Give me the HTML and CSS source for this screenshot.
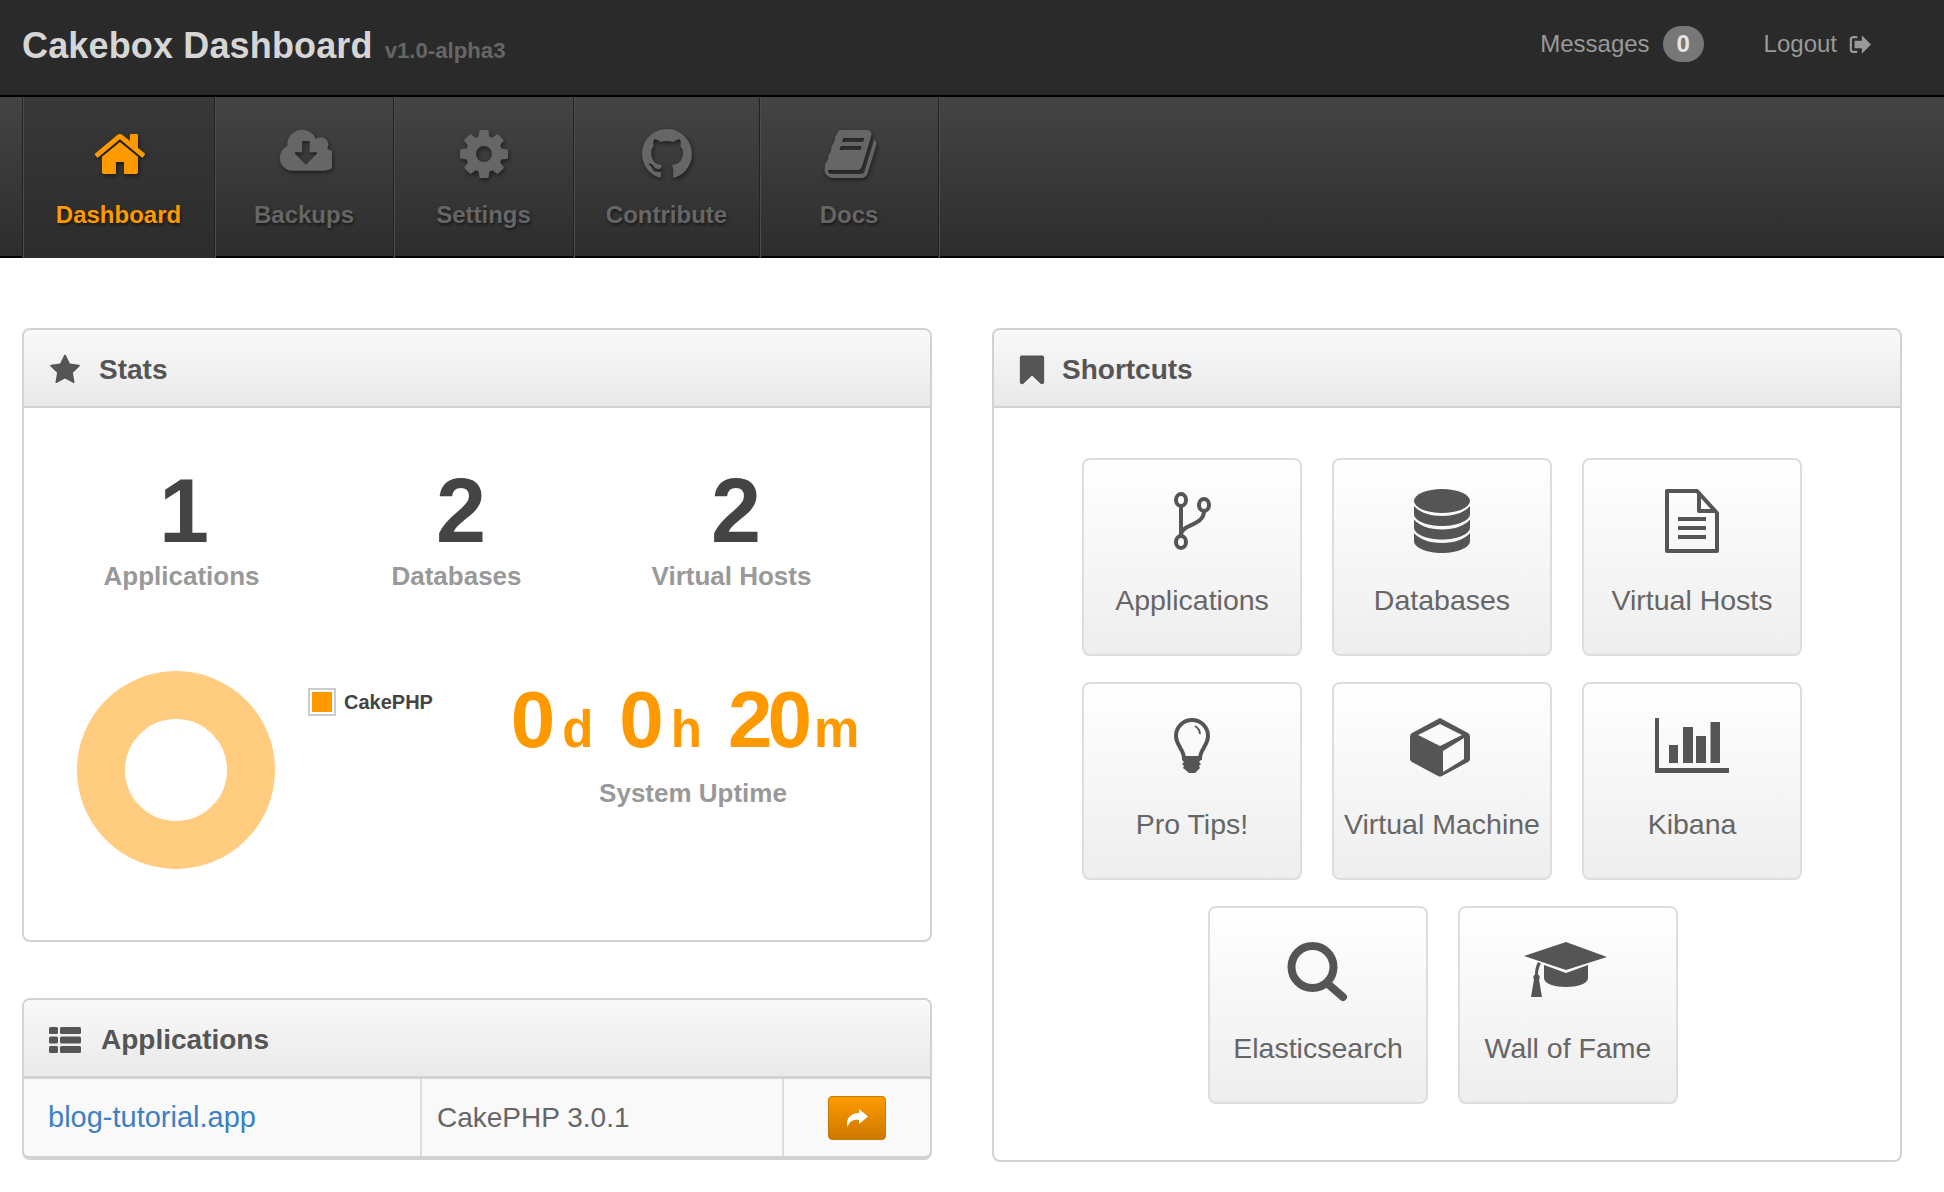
FILE: index.html
```html
<!DOCTYPE html>
<html lang="en">
<head>
<meta charset="utf-8">
<title>Cakebox Dashboard</title>
<link rel="stylesheet" href="styles.css">
</head>
<body>
<header class="topbar">
  <div class="brand"><span class="brand-name">Cakebox Dashboard</span><small class="brand-version">v1.0-alpha3</small></div>
  <div class="topbar-links">
    <a class="top-link">Messages<span class="badge">0</span></a>
    <a class="top-link logout">Logout
      <svg class="logout-icon" viewBox="0 0 24 20"><path d="M9 2H4.500A2.500 2.500 0 0 0 2 4.500v11A2.500 2.500 0 0 0 4.500 18H9" fill="none" stroke="currentColor" stroke-width="2.400"/><path d="M14 0l10 10-10 10v-6H6V6h8z" fill="currentColor"/></svg>
    </a>
  </div>
</header>
<nav class="mainnav">
  <a class="nav-item active">
    <svg class="nav-icon" viewBox="-30 0 1792 1792"><path d="M1472 992v480q0 26-19 45t-45 19h-384v-384h-256v384h-384q-26 0-45-19t-19-45v-480q0-1 .5-3t.5-3l575-474 575 474q1 2 1 6zm223-69l-62 74q-8 9-21 11h-3q-13 0-21-7l-692-577-692 577q-12 8-24 7-13-2-21-11l-62-74q-8-10-7-23.500t11-21.500l719-599q32-26 76-26t76 26l244 204v-195q0-14 9-23t23-9h192q14 0 23 9t9 23v408l219 182q10 8 11 21.500t-7 23.500z"/></svg>
    <span>Dashboard</span>
  </a>
  <a class="nav-item">
    <svg class="nav-icon" viewBox="-130 0 1920 1792"><path d="M1280 864q0-14-9-23t-23-9h-224v-352q0-13-9.500-22.500t-22.500-9.500h-192q-13 0-22.500 9.500t-9.500 22.500v352h-224q-13 0-22.500 9.500t-9.500 22.500q0 14 9 23l352 352q9 9 23 9t23-9l351-351q10-12 10-24zm640 224q0 159-112.500 271.500t-271.500 112.500h-1088q-185 0-316.500-131.500t-131.500-316.500q0-130 70-240t188-165q-2-30-2-43 0-212 150-362t362-150q156 0 285.500 87t188.500 231q71-62 166-62 106 0 181 75t75 181q0 76-41 138 130 31 213.500 135.500t83.500 238.500z"/></svg>
    <span>Backups</span>
  </a>
  <a class="nav-item">
    <svg class="nav-icon" viewBox="0 0 1792 1792"><path d="M1152 896q0-106-75-181t-181-75-181 75-75 181 75 181 181 75 181-75 75-181zm512-109v222q0 12-8 23t-20 13l-185 28q-19 54-39 91 35 50 107 138 10 12 10 25t-9 23q-27 37-99 108t-94 71q-12 0-26-9l-138-108q-44 23-91 38-16 136-29 186-7 28-36 28h-222q-14 0-24.500-8.500t-11.500-21.500l-28-184q-49-16-90-37l-141 107q-10 9-25 9-14 0-25-11-126-114-165-168-7-10-7-23 0-12 8-23 15-21 51-66.500t54-70.500q-27-50-41-99l-183-27q-13-2-21-12.500t-8-23.500v-222q0-12 8-23t19-13l186-28q14-46 39-92-40-57-107-138-10-12-10-24 0-10 9-23 26-36 98.500-107.500t94.500-71.500q13 0 26 10l138 107q44-23 91-38 16-136 29-186 7-28 36-28h222q14 0 24.500 8.500t11.500 21.500l28 184q49 16 90 37l142-107q9-9 24-9 13 0 25 10 129 119 165 170 7 8 7 22 0 12-8 23-15 21-51 66.500t-54 70.500q26 50 41 98l183 28q13 2 21 12.500t8 23.500z"/></svg>
    <span>Settings</span>
  </a>
  <a class="nav-item">
    <svg class="nav-icon" viewBox="-1 -1 18 18"><path d="M8 0C3.580 0 0 3.580 0 8c0 3.540 2.290 6.530 5.470 7.590.4.070.55-.17.55-.38 0-.19-.01-.82-.01-1.490-2.010.37-2.530-.49-2.690-.94-.09-.23-.48-.94-.82-1.130-.28-.15-.68-.52-.01-.53.63-.01 1.080.58 1.230.82.72 1.210 1.870.87 2.330.66.07-.52.28-.87.51-1.070-1.780-.2-3.640-.89-3.640-3.950 0-.87.31-1.590.82-2.150-.08-.2-.36-1.020.08-2.120 0 0 .67-.21 2.200.82.64-.18 1.320-.27 2-.27.68 0 1.360.09 2 .27 1.530-1.040 2.200-.82 2.200-.82.44 1.100.16 1.920.08 2.120.51.56.82 1.270.82 2.150 0 3.070-1.870 3.750-3.650 3.950.29.25.54.73.54 1.480 0 1.070-.01 1.930-.01 2.200 0 .21.15.46.55.38A8.013 8.013 0 0016 8c0-4.420-3.580-8-8-8z"/></svg>
    <span>Contribute</span>
  </a>
  <a class="nav-item">
    <svg class="nav-icon" viewBox="-110 0 1792 1792"><path d="M1639 478q40 57 18 129l-275 906q-19 64-76.500 107.500t-122.500 43.500h-923q-77 0-148.500-53.500t-99.500-131.500q-24-67-2-127 0-4 3-27t4-37q1-8-3-21.500t-3-19.500q2-11 8-21t16.500-23.500 16.500-23.500q23-38 45-91.500t30-91.500q3-10 .5-30t-.5-28q3-11 17-28t17-23q21-36 42-92t25-90q1-9-2.500-32t.5-28q4-13 22-30.500t22-22.500q19-26 42.500-84.500t27.500-96.500q1-8-3-25.500t-2-26.500q2-8 9-18t18-23 17-21q8-12 16.500-30.500t15-35 16-36 19.500-32 26.500-23.500 36-11.500 47.500 5.500l-1 3q38-9 51-9h761q74 0 114 56t18 130l-274 906q-36 119-71.500 153.500t-128.500 34.500h-869q-27 0-38 15-11 16-1 43 24 70 144 70h923q29 0 56-15.500t35-41.500l300-987q7-22 5-57 38 15 59 43zm-1064 2q-4 13 2 22.500t20 9.500h608q13 0 25.500-9.500t16.500-22.500l21-64q4-13-2-22.500t-20-9.500h-608q-13 0-25.500 9.500t-16.500 22.500zm-83 256q-4 13 2 22.500t20 9.500h608q13 0 25.500-9.500t16.500-22.500l21-64q4-13-2-22.500t-20-9.500h-608q-13 0-25.500 9.500t-16.500 22.500z"/></svg>
    <span>Docs</span>
  </a>
</nav>
<main class="content">
  <div class="column">
    <section class="panel stats-panel">
      <h2 class="panel-head">
        <svg class="head-icon" viewBox="0 0 1792 1792"><path d="M1728 647q0 22-26 48l-363 354 86 500q1 7 1 20 0 21-10.500 35.500t-30.500 14.500q-19 0-40-12l-449-236-449 236q-22 12-40 12-21 0-31.500-14.500t-10.500-35.500q0-6 2-20l86-500-364-354q-25-27-25-48 0-37 56-46l502-73 225-455q19-41 49-41t49 41l225 455 502 73q56 9 56 46z"/></svg>
        Stats
      </h2>
      <div class="stats-row">
        <div class="stat stat-first"><div class="stat-num">1</div><div class="stat-label">Applications</div></div>
        <div class="stat"><div class="stat-num">2</div><div class="stat-label">Databases</div></div>
        <div class="stat"><div class="stat-num">2</div><div class="stat-label">Virtual Hosts</div></div>
      </div>
      <div class="chart-row">
        <svg class="donut" viewBox="0 0 198 198"><circle cx="99" cy="99" r="75" fill="none" stroke="#ffcc80" stroke-width="48"/></svg>
        <div class="legend"><span class="legend-swatch"><span class="legend-fill"></span></span>CakePHP</div>
        <div class="uptime">
          <div class="uptime-value"><span class="num">0</span><span class="unit">d</span><span class="num">0</span><span class="unit">h</span><span class="num tight">20</span><span class="unit">m</span></div>
          <div class="uptime-label">System Uptime</div>
        </div>
      </div>
    </section>
    <section class="panel apps-panel">
      <h2 class="panel-head apps-head">
        <svg class="head-icon list-icon" viewBox="0 0 32 26"><rect width="9" height="7" rx="1.500"/><rect x="11" width="21" height="7" rx="1.500"/><rect y="9.500" width="9" height="7" rx="1.500"/><rect x="11" y="9.500" width="21" height="7" rx="1.500"/><rect y="19" width="9" height="7" rx="1.500"/><rect x="11" y="19" width="21" height="7" rx="1.500"/></svg>
        Applications
      </h2>
      <table class="apps-table">
        <tr>
          <td class="cell-name"><a class="app-link">blog-tutorial.app</a></td>
          <td class="cell-type">CakePHP 3.0.1</td>
          <td class="cell-action"><a class="go-btn"><svg viewBox="0 0 24 20" class="go-icon"><path d="M14 1l9 7.500-9 7.500v-4.300C8 11.500 4.500 13 2.500 19 .5 11 5 5.200 14 5z"/></svg></a></td>
        </tr>
      </table>
    </section>
  </div>
  <div class="column">
    <section class="panel shortcuts-panel">
      <h2 class="panel-head shortcuts-head">
        <svg class="head-icon" viewBox="0 0 1792 1792"><path d="M1420 128q23 0 44 9 33 13 52.500 41t19.500 62v1289q0 34-19.500 62t-52.500 41q-19 8-44 8-48 0-83-32l-441-424-441 424q-36 33-83 33-23 0-44-9-33-13-52.500-41t-19.500-62v-1289q0-34 19.500-62t52.500-41q21-9 44-9h1048z"/></svg>
        Shortcuts
      </h2>
      <div class="tiles">
        <a class="tile">
          <svg class="tile-icon" viewBox="-16 0 96 64"><g fill="none" stroke-width="4"><ellipse cx="21" cy="11" rx="5" ry="6"/><ellipse cx="44" cy="16" rx="5" ry="6"/><ellipse cx="21" cy="53" rx="5" ry="6"/><path d="M21 17v30M44 22c0 15-23 13-23 24"/></g></svg>
          <span>Applications</span>
        </a>
        <a class="tile">
          <svg class="tile-icon solid" viewBox="-16 0 96 64"><ellipse cx="32" cy="12" rx="28" ry="12"/><path d="M4 17v8c0 6.600 12.500 12 28 12s28-5.400 28-12v-8c-5 6-15 10-28 10S9 23 4 17z"/><path d="M4 30.500v8c0 6.600 12.500 12 28 12s28-5.400 28-12v-8c-5 6-15 10-28 10s-23-4-28-10z"/><path d="M4 44v8c0 6.600 12.500 12 28 12s28-5.400 28-12v-8c-5 6-15 10-28 10S9 50 4 44z"/></svg>
          <span>Databases</span>
        </a>
        <a class="tile">
          <svg class="tile-icon" viewBox="-16 0 96 64"><g fill="none" stroke-width="4" stroke-linejoin="round"><path d="M7 2h30l20 22v38H7z"/><path d="M39 3v19h17M18 30h28M18 39h28M18 48h28"/></g></svg>
          <span>Virtual Hosts</span>
        </a>
        <a class="tile">
          <svg class="tile-icon" viewBox="-16 0 96 64"><path d="M24 45c0-8-8-13-8-22a16 16 0 0 1 32 0c0 9-8 14-8 22z" fill="none" stroke-width="4"/><path d="M35 13a10 10 0 0 1 5 8" fill="none" stroke-width="2"/><path class="fill" d="M23 44h18v3l-2 2 2 2-2 2 1 2-5 5h-6l-6-5 1-2-2-2 2-2-2-2z"/></svg>
          <span>Pro Tips!</span>
        </a>
        <a class="tile">
          <svg class="tile-icon" viewBox="-16 0 96 64"><path class="fill" fill-rule="evenodd" d="M30 5l28 15q2 1 2 4v22q0 2-2 3L32 63q-2 1-4 0L2 49q-2-1-2-3V24q0-3 2-4zM30 11L8 22l22 11 22-11zM33 38v21l21-13V25z"/></svg>
          <span>Virtual Machine</span>
        </a>
        <a class="tile">
          <svg class="tile-icon" viewBox="-16 0 96 64"><path class="fill" d="M-5 5h4v50h70v5H-5zM9 32h9v18H9zM23 14h10v36H23zM36 23h10v27H36zM50.500 9H60v41h-9.500z"/></svg>
          <span>Kibana</span>
        </a>
        <a class="tile tile-row-start">
          <svg class="tile-icon" viewBox="-16 0 96 64"><circle cx="26.500" cy="30" r="21" fill="none" stroke-width="8"/><path d="M42 47l15 13" fill="none" stroke-width="8" stroke-linecap="round"/></svg>
          <span>Elasticsearch</span>
        </a>
        <a class="tile">
          <svg class="tile-icon" viewBox="-16 0 96 64"><path class="fill" d="M30 5l41 15-41 13-42-14zM8 28l22 8 22-8v13c0 6-11 9-22 9S8 47 8 41zM2 25l3 1.500c-2 3-3 7-3 11 2 1 2 4 1 5l3 17.500H-5l3-17.500c-1-1-1-4 1-5 0-5 1-9 3-12.500z"/></svg>
          <span>Wall of Fame</span>
        </a>
      </div>
    </section>
  </div>
</main>
</body>
</html>
```

FILE: styles.css
```css
* { box-sizing: border-box; }
html, body { margin: 0; padding: 0; }
body {
  width: 1944px;
  min-height: 1192px;
  background: #fff;
  font-family: "Liberation Sans", Arial, sans-serif;
  color: #555;
  overflow: hidden;
}

/* top bar */
.topbar {
  height: 97px;
  background: #2a2a2a;
  border-bottom: 2px solid #000;
  display: flex;
  align-items: flex-start;
  justify-content: space-between;
  padding: 0 73px 0 22px;
}
.brand { display: flex; align-items: baseline; padding-top: 24px; }
.brand-name { font-size: 36px; line-height: 44px; font-weight: 700; color: #d6d6d6; letter-spacing: .15px; }
.brand-version { font-size: 22.2px; font-weight: 700; color: #666; margin-left: 12px; }
.topbar-links { display: flex; padding-top: 26px; }
.top-link { display: flex; align-items: center; height: 36px; font-size: 24px; color: #999; }
.badge {
  display: inline-block;
  width: 41px;
  height: 36px;
  line-height: 36px;
  margin-left: 13px;
  border-radius: 18px;
  background: #777;
  color: #e6e6e6;
  font-size: 24px;
  font-weight: 700;
  text-align: center;
}
.logout { margin-left: 60px; }
.logout-icon { width: 22px; height: 19px; margin-left: 12px; }

/* main nav */
.mainnav {
  height: 161px;
  padding-left: 22px;
  background: linear-gradient(#444, #2d2d2d);
  border-bottom: 2px solid #000;
  display: grid;
  grid-template-columns: 192px 179px 180px 186px 180px;
  justify-content: start;
}
.nav-item {
  display: flex;
  flex-direction: column;
  align-items: center;
  padding-top: 29px;
  height: 161px;
  border-left: 1px solid #222;
  box-shadow: inset 1px 0 0 #4c4c4c;
  color: #666;
  fill: #666;
  font-size: 24px;
  font-weight: 700;
  text-shadow: 1px 2px 3px rgba(0, 0, 0, .55);
}
.nav-item:last-child { border-right: 1px solid #222; box-shadow: inset 1px 0 0 #4c4c4c, 1px 0 0 #4c4c4c; }
.nav-item span { line-height: 30px; margin-top: 18px; }
.nav-item.active { color: #f90; fill: #f90; background: linear-gradient(#383838, #2c2c2c); }
.nav-icon { width: 56px; height: 56px; filter: drop-shadow(1px 2px 2px rgba(0, 0, 0, .5)); }

/* content */
.content {
  display: grid;
  grid-template-columns: 910px 910px;
  column-gap: 60px;
  padding: 70px 0 0 22px;
  align-items: start;
}
.column { display: flex; flex-direction: column; gap: 56px; }
.panel {
  border: 2px solid #d2d2d2;
  border-radius: 8px;
  overflow: hidden;
  background: #fff;
}
.panel-head {
  margin: 0;
  height: 78px;
  display: flex;
  align-items: center;
  padding: 3px 0 0 25px;
  background: linear-gradient(#f9f9f9, #e9e9e9);
  border-bottom: 2px solid #d2d2d2;
  font-size: 28px;
  font-weight: 700;
  color: #555;
}
.head-icon { width: 32px; height: 32px; margin-right: 18px; fill: #555; flex: none; }

/* stats */
.stats-panel { height: 614px; }
.stats-row {
  display: grid;
  grid-template-columns: repeat(3, 275px);
  padding: 53px 0 0 20px;
}
.stat { text-align: center; }
.stat-num { font-size: 90px; line-height: 100px; font-weight: 700; color: #444; padding-left: 9px; }
.stat-first .stat-num { padding-left: 5px; }
.stat-label { font-size: 26px; line-height: 34px; font-weight: 700; color: #999; margin-top: -2px; }
.chart-row { display: flex; align-items: flex-start; padding: 78px 0 0 53px; }
.donut { width: 198px; height: 198px; flex: none; }
.legend {
  display: flex;
  align-items: center;
  margin: 17px 0 0 33px;
  font-size: 20px;
  font-weight: 700;
  color: #444;
  width: 127px;
}
.legend-swatch {
  width: 28px;
  height: 28px;
  padding: 2px;
  border: 2px solid #ccc;
  margin-right: 8px;
  flex: none;
}
.legend-fill { display: block; width: 20px; height: 20px; background: #f90; }
.uptime { display: flex; flex-direction: column; align-items: center; width: 348px; margin: 3px 0 0 76px; }
.uptime-value { display: flex; align-items: baseline; color: #f90; font-weight: 700; height: 92px; line-height: 92px; }
.num { font-size: 80px; }
.num.tight { letter-spacing: -5px; }
.unit { font-size: 51px; margin-left: 7px; }
.unit + .num { margin-left: 26px; }
.uptime-label { font-size: 26px; line-height: 34px; font-weight: 700; color: #999; margin: 10px 0 0 16px; }

/* applications table */
.apps-panel { border-bottom-width: 4px; }
.apps-head { height: 79px; padding-top: 3px; border-bottom-width: 3px; }
.list-icon { margin-right: 20px; width: 32px; height: 26px; }
.apps-table { width: 100%; border-collapse: collapse; background: #f9f9f9; height: 77px; table-layout: fixed; }
.apps-table td { padding: 0; border-left: 2px solid #ddd; font-size: 29px; color: #666; }
.apps-table td:first-child { border-left: 0; }
.cell-name { width: 397px; padding-left: 24px !important; }
.apps-table .cell-type { width: 362px; padding-left: 15px; font-size: 28px; }
.cell-action { text-align: center; }
.app-link { color: #3d80c4; }
.go-btn {
  display: inline-flex;
  align-items: center;
  justify-content: center;
  vertical-align: middle;
  width: 58px;
  height: 44px;
  border-radius: 4px;
  border: 1px solid #c97a00;
  background: linear-gradient(#ff9a00, #cc7800);
}
.go-icon { width: 24px; height: 20px; fill: #fff; }

/* shortcuts */
.shortcuts-panel { height: 834px; }
.shortcuts-head .head-icon { margin-right: 13px; margin-left: -4px; width: 34px; height: 34px; }
.tiles {
  display: flex;
  flex-wrap: wrap;
  justify-content: center;
  gap: 26px 30px;
  padding: 50px 98px 0 88px;
}
.tile {
  width: 220px;
  height: 198px;
  display: flex;
  flex-direction: column;
  align-items: center;
  padding-top: 29px;
  border: 2px solid #ddd;
  border-radius: 8px;
  background: linear-gradient(#fff, #eee);
  font-size: 28.5px;
  color: #666;
}
.tile-row-start { margin-left: 2px; }
.tile span { line-height: 36px; margin-top: 29px; white-space: nowrap; }
.tile-icon { width: 96px; height: 64px; stroke: #555; fill: none; flex: none; overflow: visible; }
.tile-icon.solid { fill: #555; stroke: none; }
.tile-icon .fill { fill: #555; stroke: none; }
```
